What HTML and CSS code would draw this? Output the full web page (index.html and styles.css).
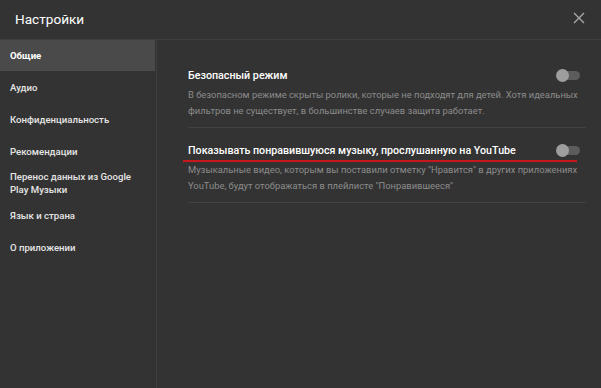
FILE: index.html
```html
<!DOCTYPE html>
<html lang="ru">
<head>
  <meta charset="UTF-8" />
  <meta name="viewport" content="width=device-width, initial-scale=1.0" />
  <title>Настройки</title>
  <link rel="stylesheet" href="styles.css">
</head>
<body>
  <div class="dialog">
    <div class="header">
      <h1>Настройки</h1>
      <button class="close" aria-label="Закрыть">
        <svg width="12" height="12" viewBox="0 0 12 12">
          <path d="M1 1 L11 11 M11 1 L1 11" stroke="#a8a8a8" stroke-width="1.4" fill="none" />
        </svg>
      </button>
    </div>

    <div class="main">
      <div class="sidebar">
        <div class="nav-item active">Общие</div>
        <div class="nav-item">Аудио</div>
        <div class="nav-item">Конфиденциальность</div>
        <div class="nav-item">Рекомендации</div>
        <div class="nav-item">Перенос данных из Google<br />Play Музыки</div>
        <div class="nav-item">Язык и страна</div>
        <div class="nav-item">О приложении</div>
      </div>

      <div class="content">
        <div class="setting">
          <div class="setting-head">
            <span class="setting-title">Безопасный режим</span>
            <span class="toggle"></span>
          </div>
          <p class="setting-desc">В безопасном режиме скрыты ролики, которые не подходят для детей. Хотя идеальных фильтров не существует, в большинстве случаев защита работает.</p>
        </div>

        <div class="setting">
          <div class="setting-head marked">
            <span class="setting-title">Показывать понравившуюся музыку, прослушанную на YouTube</span>
            <span class="toggle"></span>
          </div>
          <p class="setting-desc">Музыкальные видео, которым вы поставили отметку "Нравится" в других приложениях YouTube, будут отображаться в плейлисте "Понравившееся"</p>
        </div>
      </div>
    </div>
  </div>
</body>
</html>
```

FILE: styles.css
```css
body {
  margin: 0;
  padding: 0;
  background: #333333;
  font-family: Roboto, "Noto Sans", sans-serif;
  color: #eeeeee;
}
.dialog {
  width: 601px;
  height: 388px;
  display: flex;
  flex-direction: column;
}
.header {
  height: 40px;
  border-bottom: 1px solid #3f3f3f;
  display: flex;
  align-items: center;
  justify-content: space-between;
  padding: 0 16px 0 15px;
  box-sizing: border-box;
  flex-shrink: 0;
}
.header h1 {
  margin: 0;
  font-size: 13.6px;
  font-weight: 400;
  color: #ffffff;
  padding-bottom: 2px;
}
.close {
  background: none;
  border: none;
  padding: 0;
  width: 12px;
  height: 12px;
  display: flex;
  margin-bottom: 3px;
}
.main {
  flex: 1;
  display: flex;
}
.sidebar {
  width: 155px;
  padding-right: 1px;
  border-right: 1px solid #3f3f3f;
  flex-shrink: 0;
}
.nav-item {
  height: 32px;
  display: flex;
  align-items: center;
  padding: 0 10px;
  font-size: 9.6px;
  font-weight: 500;
  line-height: 13px;
  color: #e6e6e6;
}
.nav-item.active {
  background: #4a4a4a;
  color: #ffffff;
  font-weight: 700;
  height: 31px;
}
.content {
  flex: 1;
  padding: 13px 15px 0 31px;
}
.setting {
  padding: 13px 0 8px;
  border-bottom: 1px solid #424242;
}
.setting-head {
  display: flex;
  align-items: center;
  justify-content: space-between;
  height: 18px;
  position: relative;
}
.setting-title {
  font-size: 10.7px;
  font-weight: 500;
  color: #ffffff;
}
.marked::after {
  content: "";
  position: absolute;
  left: -5px;
  right: 9px;
  bottom: -3px;
  height: 2px;
  background: #c8161d;
}
.toggle {
  position: relative;
  width: 24px;
  height: 13px;
  margin-right: 6px;
}
.toggle::before {
  content: "";
  position: absolute;
  left: 4px;
  right: 0;
  top: 2px;
  height: 9px;
  border-radius: 5px;
  background: #5c5c5c;
}
.toggle::after {
  content: "";
  position: absolute;
  left: 0;
  top: 0;
  width: 13px;
  height: 13px;
  border-radius: 50%;
  background: #9e9e9e;
}
.setting-desc {
  margin: 3px 0 0;
  font-size: 9.4px;
  line-height: 16px;
  color: #8c8c8c;
}
```
